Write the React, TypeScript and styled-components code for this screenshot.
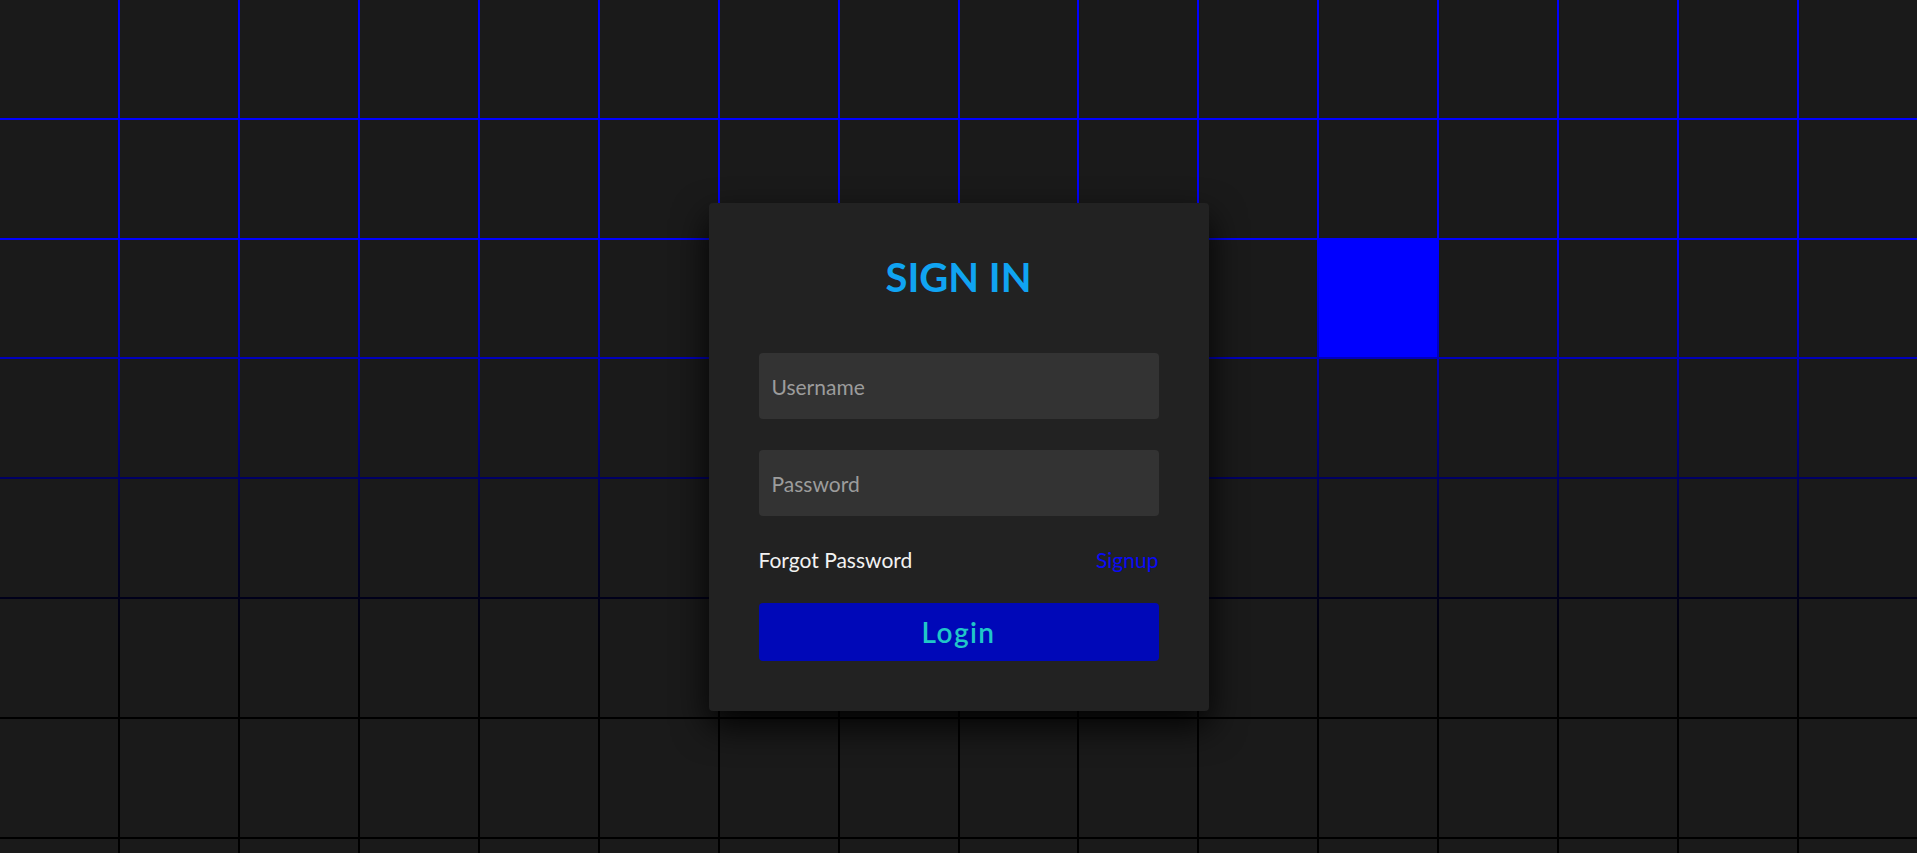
import styled, { createGlobalStyle } from "styled-components";

const COLUMNS = 16;
const ROWS = 8;
const LIT_CELL = 2 * COLUMNS + 11;

const GlobalStyle = createGlobalStyle`
  * {
    box-sizing: border-box;
  }

  html,
  body {
    margin: 0;
    padding: 0;
    background: #000;
    font-family: "Lato", "Noto Sans", sans-serif;
    overflow: hidden;
  }
`;

const Page = styled.main`
  position: relative;
  width: 100vw;
  height: 100vh;
  overflow: hidden;
`;

const Grid = styled.section`
  width: 100%;
  height: 100%;
  display: grid;
  grid-template-columns: repeat(${COLUMNS}, 1fr);
  grid-auto-rows: calc(6.25vw - 2px);
  gap: 2px;
  background: linear-gradient(
    180deg,
    #0000ff 0px,
    #0000ff 250px,
    #0000a0 400px,
    #000030 540px,
    #000 660px
  );
`;

const Cell = styled.span<{ $lit: boolean }>`
  display: block;
  background: ${(props) => (props.$lit ? "#0000ff" : "#1a1a1a")};
`;

const Overlay = styled.div`
  position: absolute;
  inset: 0;
  display: flex;
  justify-content: center;
  align-items: flex-start;
  padding-top: 203px;
`;

const Card = styled.div`
  width: 500px;
  padding: 50px;
  background: #222;
  border-radius: 4px;
  box-shadow: 0 15px 35px rgba(0, 0, 0, 0.9);
  display: flex;
  flex-direction: column;
  align-items: center;
  gap: 52px;
`;

const Title = styled.h2`
  margin: 0;
  font-size: 40px;
  line-height: 48px;
  font-weight: 700;
  color: #10a4f2;
  text-transform: uppercase;
`;

const Form = styled.form`
  width: 100%;
  display: flex;
  flex-direction: column;
  gap: 31px;
`;

const Input = styled.input`
  width: 100%;
  height: 66px;
  padding: 0 13px;
  border: none;
  outline: none;
  border-radius: 4px;
  background: #333;
  color: #fff;
  font-family: "Lato", "Noto Sans", sans-serif;
  font-size: 21px;

  &::placeholder {
    color: #9c9c9c;
  }
`;

const Links = styled.div`
  display: flex;
  justify-content: space-between;
  font-size: 21px;
  line-height: 25px;
`;

const LinkText = styled.a<{ $accent?: boolean }>`
  color: ${(props) => (props.$accent ? "#0a0af5" : "#f2f2f2")};
  text-decoration: none;
  cursor: pointer;
`;

const Submit = styled.button`
  height: 58px;
  border: none;
  border-radius: 4px;
  background: #0008b8;
  color: #20c6c8;
  font-family: "Lato", "Noto Sans", sans-serif;
  font-size: 28px;
  font-weight: 600;
  letter-spacing: 0.05em;
  cursor: pointer;
`;

const App = () => {
  const cells = Array.from({ length: COLUMNS * ROWS }, (_, i) => i);

  return (
    <Page>
      <GlobalStyle />
      <Grid>
        {cells.map((i) => (
          <Cell key={i} $lit={i === LIT_CELL} />
        ))}
      </Grid>
      <Overlay>
        <Card>
          <Title>Sign In</Title>
          <Form onSubmit={(e) => e.preventDefault()}>
            <Input type="text" placeholder="Username" />
            <Input type="password" placeholder="Password" />
            <Links>
              <LinkText>Forgot Password</LinkText>
              <LinkText $accent>Signup</LinkText>
            </Links>
            <Submit type="submit">Login</Submit>
          </Form>
        </Card>
      </Overlay>
    </Page>
  );
};

export default App;
